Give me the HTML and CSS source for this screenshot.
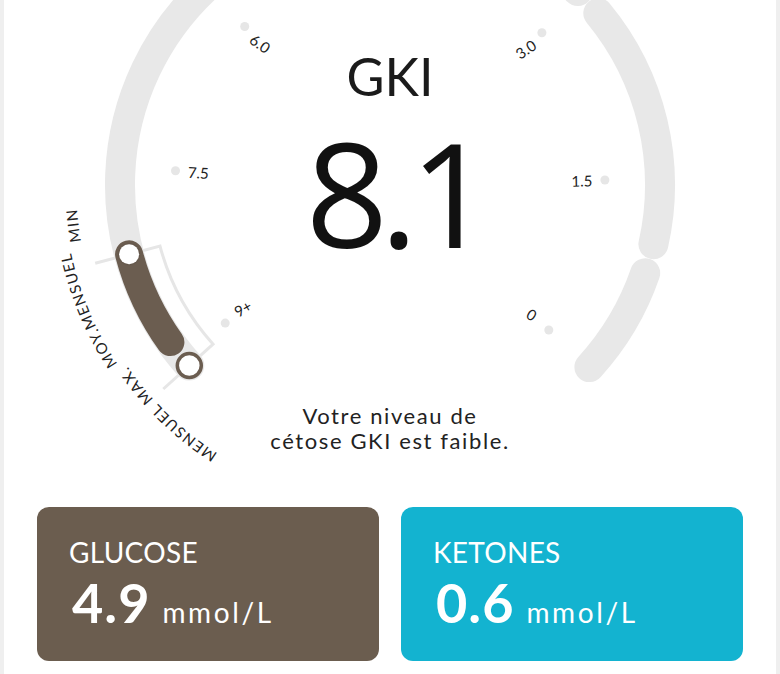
FILE: index.html
```html
<!DOCTYPE html>
<html lang="fr">
<head>
  <meta charset="UTF-8">
  <meta name="viewport" content="width=device-width, initial-scale=1.0">
  <title>GKI</title>
  <link rel="stylesheet" href="styles.css">
</head>
<body>
  <div class="page">
    <svg class="dial" id="dial" viewBox="4 0 772 500" width="772" height="500"></svg>

    <div class="gauge">
      <div class="gki-title">GKI</div>
      <div class="gki-value">8.1</div>
      <p class="gki-msg">Votre niveau de<br>cétose GKI est faible.</p>
    </div>

    <div class="cards">
      <div class="card glucose">
        <div class="card-label">GLUCOSE</div>
        <div class="card-value">4.9<span class="unit">mmol/L</span></div>
      </div>
      <div class="card ketones">
        <div class="card-label">KETONES</div>
        <div class="card-value">0.6<span class="unit">mmol/L</span></div>
      </div>
    </div>
  </div>

  <script>
    const svg = document.getElementById('dial');
    const cx = 390, cy = 185, R = 270;
    const ang = v => 42.4 - v * 29.15;

    function pt(a, r) {
      const t = a * Math.PI / 180;
      return (cx + r * Math.cos(t)).toFixed(1) + ' ' + (cy + r * Math.sin(t)).toFixed(1);
    }

    function arc(a1, a2, r) {
      const large = Math.abs(a1 - a2) > 180 ? 1 : 0;
      const sweep = a2 > a1 ? 1 : 0;
      return `M${pt(a1, r)} A${r} ${r} 0 ${large} ${sweep} ${pt(a2, r)}`;
    }

    const cap = 3.2;
    const min = 8.14, avg = 8.85, max = 9.07;
    const zones = [0, 0.91, 2.92, 5.92, max];
    let html = `<defs><filter id="sh" x="-50%" y="-50%" width="200%" height="200%">
      <feDropShadow dx="0" dy="0" stdDeviation="1.2" flood-color="#000" flood-opacity=".25"/></filter></defs>`;

    // bracket for the monthly range
    html += `<path class="bracket" d="M${pt(ang(min), 305)} L${pt(ang(min), 238)} A238 238 0 0 0 ${pt(ang(max), 238)} L${pt(ang(max), 305)}"/>`;

    for (let i = 0; i < zones.length - 1; i++) {
      const a1 = ang(zones[i]) - (i > 0 ? cap : 0);
      const a2 = ang(zones[i + 1]) + (i < zones.length - 2 ? cap : 0);
      html += `<path class="track" d="${arc(a1, a2, R)}"/>`;
    }

    html += `<path class="range" d="${arc(ang(min), ang(avg), R)}"/>`;

    [0, 1.5, 3, 4.5, 6, 7.5, 9].forEach(v => {
      const a = ang(v);
      let rot = a < -90 ? a + 180 : a;
      if (Math.abs(rot + 90) < 2) rot = 0;
      rot *= 0.75;
      const [dx, dy] = pt(a, 215).split(' ');
      const [x, y] = pt(a, 192).split(' ');
      const txt = v === 9 ? '9+' : v === 0 ? '0' : v.toFixed(1);
      html += `<circle class="tick" cx="${dx}" cy="${dy}" r="4.5"/>`;
      html += `<text class="tick-label" x="${x}" y="${y}" transform="rotate(${rot.toFixed(1)} ${x} ${y})">${txt}</text>`;
    });

    // range labels follow the outside of the dial
    [['MENSUEL MAX.', 319, 15], ['MOY.MENSUEL', 326, 152], ['MIN', 314, 272]].forEach(([t, r, off], i) => {
      html += `<path id="lbl${i}" fill="none" d="M${pt(120, r)} A${r} ${r} 0 0 1 ${pt(182, r)}"/>`;
      html += `<text class="arc-label"><textPath href="#lbl${i}" startOffset="${off}">${t}</textPath></text>`;
    });

    const [mx, my] = pt(ang(min), R).split(' ');
    const [xx, xy] = pt(ang(max), R).split(' ');
    html += `<circle class="dot" cx="${mx}" cy="${my}" r="10"/>`;
    html += `<circle class="ring" cx="${xx}" cy="${xy}" r="12"/>`;

    svg.innerHTML = html;
  </script>
</body>
</html>
```

FILE: styles.css
```css
body {
  margin: 0;
  background: #efefef;
  font-family: Lato, "Open Sans", sans-serif;
  color: #1b1b1b;
}
.page {
  position: relative;
  width: 772px;
  min-height: 100vh;
  margin: 0 auto;
  background: #fff;
  overflow: hidden;
}
.dial {
  position: absolute;
  left: 0;
  top: 0;
}
.gauge {
  position: relative;
  display: flex;
  flex-direction: column;
  align-items: center;
  padding-top: 46px;
}
.gki-title {
  font-size: 52px;
  line-height: 60px;
}
.gki-value {
  margin-top: 11px;
  padding-left: 10px;
  font-family: "Open Sans", Lato, sans-serif;
  font-size: 144px;
  line-height: 150px;
  letter-spacing: -8px;
  color: #111;
}
.gki-msg {
  margin: 136px 0 0;
  font-size: 22px;
  line-height: 25px;
  letter-spacing: 1.6px;
  text-align: center;
  color: #222;
}
.cards {
  position: relative;
  display: flex;
  gap: 22px;
  padding: 0 33px;
  margin-top: 54px;
}
.card {
  flex: 1;
  height: 154px;
  box-sizing: border-box;
  padding: 28px 32px 0;
  border-radius: 12px;
  color: #fff;
}
.glucose {
  background: #6b5d4f;
}
.ketones {
  background: #13b3d0;
}
.card-label {
  font-size: 28px;
  line-height: 34px;
  letter-spacing: 0.3px;
}
.card-value {
  margin-top: 6px;
  padding-left: 3px;
  font-size: 54px;
  line-height: 56px;
  font-weight: 700;
  letter-spacing: 1px;
}
.unit {
  margin-left: 12px;
  font-size: 28px;
  font-weight: 400;
  letter-spacing: 2.6px;
}

/* dial parts */
.track {
  fill: none;
  stroke: #e8e8e8;
  stroke-width: 30;
  stroke-linecap: round;
}
.range {
  fill: none;
  stroke: #6b5d50;
  stroke-width: 28;
  stroke-linecap: round;
}
.bracket {
  fill: none;
  stroke: #e6e6e6;
  stroke-width: 3;
}
.tick {
  fill: #e6e6e6;
}
.tick-label {
  font-size: 15px;
  fill: #222;
  text-anchor: middle;
  dominant-baseline: central;
}
.arc-label {
  font-size: 15px;
  letter-spacing: 1.4px;
  fill: #222;
}
.dot {
  fill: #fff;
  filter: url(#sh);
}
.ring {
  fill: #fff;
  stroke: #6b5d50;
  stroke-width: 3.5;
}
```
